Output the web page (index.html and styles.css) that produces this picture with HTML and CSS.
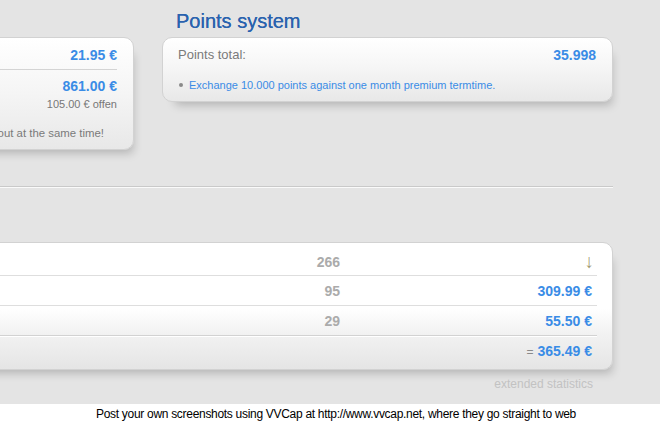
FILE: index.html
```html
<html>

<head>
    <meta charset="utf-8">
    <link rel="stylesheet" href="styles.css">
</head>

<body>
    <div class="page">
        <div class="columns">
            <div class="col colLeft">
                <div class="card balance">
                    <div class="valueRow first">
                        <span class="value">21.95 €</span>
                    </div>
                    <div class="valueRow">
                        <span class="value">861.00 €</span>
                    </div>
                    <div class="open">105.00 € offen</div>
                    <p class="note">Both amounts are paid out at the same time!</p>
                </div>
            </div>
            <div class="col colRight">
                <h2>Points system</h2>
                <div class="card points">
                    <div class="pointsRow">
                        <span class="label">Points total:</span>
                        <span class="value">35.998</span>
                    </div>
                    <ul class="bullets">
                        <li><a href="#">Exchange 10.000 points against one month premium termtime.</a></li>
                    </ul>
                </div>
            </div>
        </div>

        <hr class="divider">

        <div class="card stats">
            <div class="statRow">
                <span class="statLabel"></span>
                <span class="count">266</span>
                <span class="amount arrow">↓</span>
            </div>
            <div class="statRow">
                <span class="statLabel"></span>
                <span class="count">95</span>
                <span class="amount">309.99 €</span>
            </div>
            <div class="statRow third">
                <span class="statLabel"></span>
                <span class="count">29</span>
                <span class="amount">55.50 €</span>
            </div>
            <div class="statRow total">
                <span class="statLabel"></span>
                <span class="count"></span>
                <span class="amount"><span class="eq">=</span> 365.49 €</span>
            </div>
        </div>
        <div class="extended"><a href="#">extended statistics</a></div>
    </div>
    <div class="footer">Post your own screenshots using VVCap at http://www.vvcap.net, where they go straight to web</div>
</body>

</html>
```

FILE: styles.css
```css
body {
    font-family: "Liberation Sans", Arial, sans-serif;
    margin: 0;
    height: 100vh;
    overflow: hidden;
    display: flex;
    flex-direction: column;
    background: #e4e4e4;
    color: #777;
}

a {
    text-decoration: none;
}

.page {
    width: 779px;
    margin-left: -166px;
    padding-top: 9px;
}

.columns {
    display: grid;
    grid-template-columns: 300px 451px;
    grid-template-rows: auto auto;
    column-gap: 28px;
}

.colLeft {
    grid-row: 1 / 3;
    padding-top: 28px;
}

h2 {
    font-size: 20px;
    line-height: 24px;
    font-weight: normal;
    color: #2a62ae;
    margin: 0 0 4px 0;
    padding-left: 14px;
    text-shadow: 0 0 0.4px #2a62ae;
}

.card {
    background: linear-gradient(to bottom, #ffffff 0%, #f6f6f6 45%, #e8e8e8 100%);
    border: 1px solid #d2d2d2;
    border-radius: 10px;
    box-shadow: 6px 10px 10px -7px rgba(0, 0, 0, 0.22);
}

.value {
    color: #3a8ce6;
    font-weight: bold;
    font-size: 14px;
}

.balance {
    padding: 8px 16px 7px 15px;
    text-align: right;
}

.valueRow {
    line-height: 18px;
}

.valueRow.first {
    padding-bottom: 5px;
    border-bottom: 1px solid #d4d4d4;
    margin-bottom: 7px;
}

.open {
    font-size: 11px;
    line-height: 16px;
    color: #777;
    margin-top: 1px;
}

.note {
    font-size: 11.4px;
    line-height: 18px;
    color: #7a7a7a;
    margin: 12px 13px 0 0;
}

.points {
    padding: 8px 16px 7px 15px;
}

.pointsRow {
    display: flex;
    justify-content: space-between;
    line-height: 18px;
}

.label {
    font-size: 13px;
    color: #7a7a7a;
}

.bullets {
    list-style: none;
    margin: 12px 0 0 0;
    padding: 0;
}

.bullets li {
    font-size: 11px;
    line-height: 18px;
    display: flex;
    align-items: center;
}

.bullets li::before {
    content: "";
    width: 4px;
    height: 4px;
    border-radius: 50%;
    background: #8a8a8a;
    margin: 0 6px 0 1px;
}

.bullets a {
    color: #3a8ce6;
}

.divider {
    border: 0;
    border-top: 1px solid #c9c9c9;
    border-bottom: 1px solid #fafafa;
    margin: 36px 0 0 0;
}

.stats {
    margin-top: 54px;
    padding: 6px 15px 3px 15px;
    background: linear-gradient(to bottom, #ffffff 0%, #ffffff 52%, #f2f2f2 72%, #e5e5e5 100%);
}

.statRow {
    display: grid;
    grid-template-columns: 1fr 60px 257px;
    height: 29px;
    align-items: center;
    border-bottom: 1px solid #dedede;
    font-size: 14px;
    font-weight: bold;
}

.statRow:first-child {
    height: 26px;
}

.statRow.third {
    border-bottom-color: #d2d2d2;
    box-shadow: 0 1px 0 #ffffff;
}

.statRow.total {
    border-bottom: 0;
    height: 30px;
}

.count {
    text-align: right;
    color: #ababab;
}

.amount {
    text-align: right;
    padding-right: 5px;
    color: #3a8ce6;
}

.arrow {
    color: #a39c74;
    font-weight: normal;
    font-size: 19px;
    padding-right: 3px;
}

.eq {
    color: #8a8a8a;
    font-weight: normal;
    font-size: 12px;
}

.extended {
    text-align: right;
    padding-right: 20px;
    margin-top: 6px;
    font-size: 12px;
    line-height: 16px;
}

.extended a {
    color: #c2c2c2;
}

.footer {
    margin-top: auto;
    background: #ffffff;
    height: 21px;
    line-height: 21px;
    font-size: 12px;
    color: #000;
    text-align: center;
    padding-left: 12px;
    letter-spacing: -0.3px;
}
```
